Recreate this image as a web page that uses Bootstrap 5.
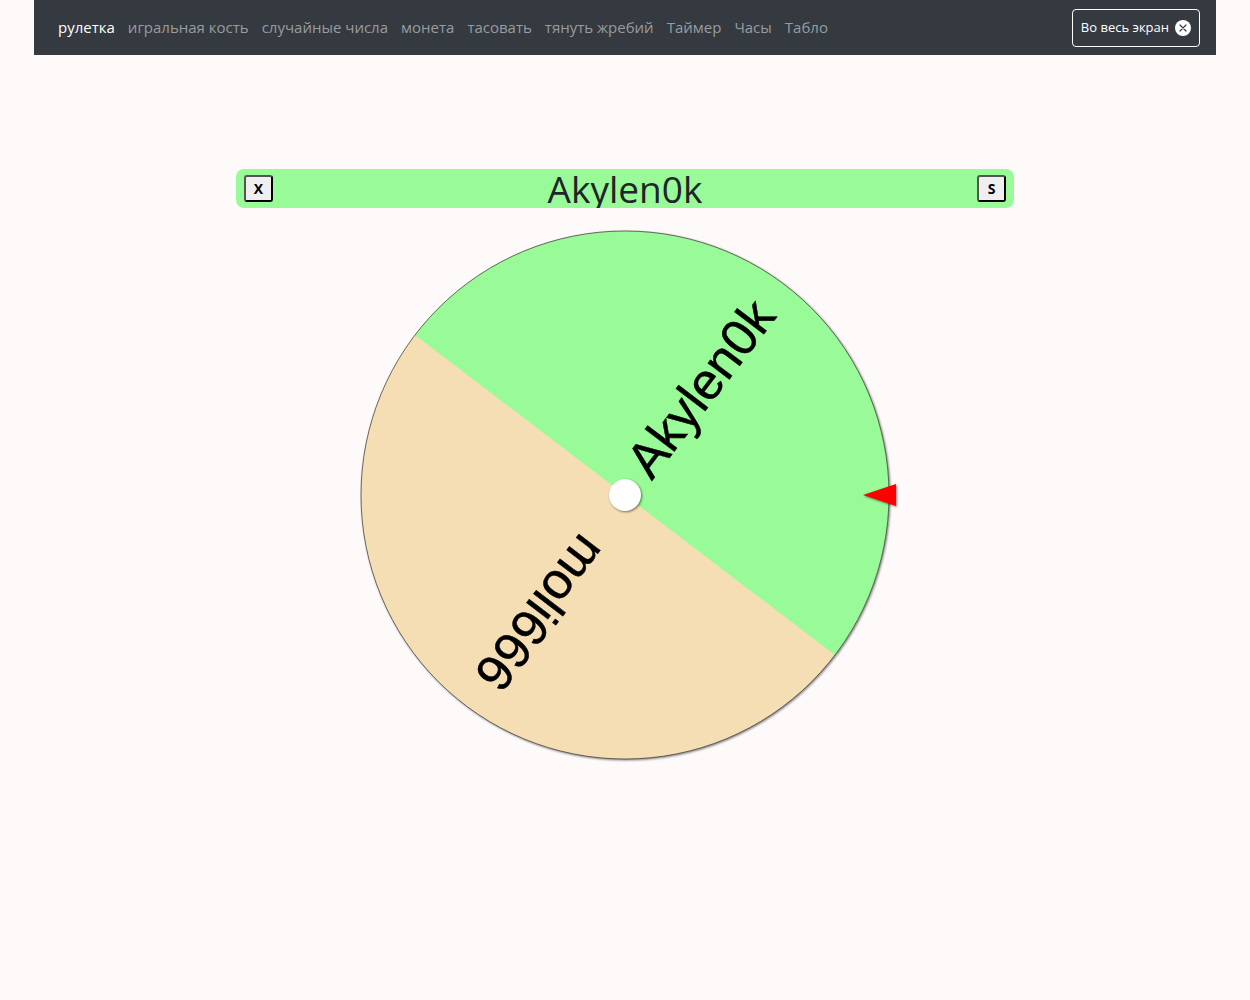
<!DOCTYPE html>
<html lang="ru">
<head>
<meta charset="utf-8">
<meta name="viewport" content="width=device-width, initial-scale=1">
<title>Рулетка</title>
<link href="https://cdn.jsdelivr.net/npm/bootstrap@5.3.0/dist/css/bootstrap.min.css" rel="stylesheet">
<style>
  body { background: #fffafa; font-family: "Open Sans", "Noto Sans", sans-serif; color: #212529; }
  .page-shell { padding: 0 34px; }
  .top-nav { background: #343a40; padding: 8px 16px; min-height: 55px; font-size: 15px; }
  .top-nav .navbar-nav { column-gap: 13px; padding-left: 8px; }
  .navbar.top-nav .navbar-nav .nav-link { color: #999c9f; padding: 6px 0 8px; line-height: 24px; white-space: nowrap; }
  .navbar.top-nav .navbar-nav .nav-link.active { color: #fff; }
  .full-btn { border: 1px solid #fff; border-radius: 4px; color: #fff; font-size: 13px; height: 38px; padding: 0 8px; gap: 6px; white-space: nowrap; }
  .full-btn:hover { border-color: #fff; background: #495057; color: #fff; }
  .wheel-area { padding-top: 114px; --bs-gutter-x: 10px; }
  .result-bar { background: #98fb98; border-radius: 8px; height: 39px; padding: 0 8px; overflow: hidden; }
  .result-name { font-size: 37px; line-height: 44px; margin: 0; font-weight: 400; }
  .tool-btn { width: 29px; height: 27px; padding: 0; border: 2px outset #000; border-radius: 3px; background: #efefef; color: #000; font-size: 14px; line-height: 20px; font-weight: 700; }
  .wheel { width: 100%; max-width: 548px; margin-top: 13px; overflow: visible; }
  .wheel text { font-family: "Liberation Sans", Arial, sans-serif; font-size: 51px; text-anchor: end; }
  .shade { filter: drop-shadow(1px 1px 1px rgba(0, 0, 0, .5)); }
</style>
<script src="https://cdn.jsdelivr.net/npm/bootstrap@5.3.0/dist/js/bootstrap.bundle.min.js" defer></script>
</head>
<body>
<div class="page-shell">
  <nav class="navbar navbar-expand top-nav">
    <ul class="navbar-nav flex-wrap me-auto">
      <li class="nav-item"><a class="nav-link active" aria-current="page" href="#">рулетка</a></li>
      <li class="nav-item"><a class="nav-link" href="#">игральная кость</a></li>
      <li class="nav-item"><a class="nav-link" href="#">случайные числа</a></li>
      <li class="nav-item"><a class="nav-link" href="#">монета</a></li>
      <li class="nav-item"><a class="nav-link" href="#">тасовать</a></li>
      <li class="nav-item"><a class="nav-link" href="#">тянуть жребий</a></li>
      <li class="nav-item"><a class="nav-link" href="#">Таймер</a></li>
      <li class="nav-item"><a class="nav-link" href="#">Часы</a></li>
      <li class="nav-item"><a class="nav-link" href="#">Табло</a></li>
    </ul>
    <button type="button" class="btn full-btn d-flex align-items-center">
      Во весь экран
      <svg width="16" height="16" viewBox="0 0 16 16" aria-hidden="true"><circle cx="8" cy="8" r="8" fill="#fff"/><path d="M5 5l6 6M11 5l-6 6" stroke="#343a40" stroke-width="1.2" stroke-linecap="round"/></svg>
    </button>
  </nav>
  <main class="row justify-content-center wheel-area mx-0">
    <div class="col-12 col-md-8 text-center">
      <div class="result-bar d-flex justify-content-between align-items-center">
        <button type="button" class="tool-btn">X</button>
        <h1 class="result-name">Akylen0k</h1>
        <button type="button" class="tool-btn">S</button>
      </div>
      <svg class="wheel" viewBox="-274 -274 548 548" role="img" aria-label="Рулетка">
        <g class="shade">
          <circle r="264" fill="#f5deb3"/>
          <path transform="rotate(37.3)" d="M-264 0A264 264 0 0 1 264 0Z" fill="#98fb98"/>
          <circle r="264" fill="none" stroke="#333" stroke-width=".7"/>
        </g>
        <g transform="rotate(-52.7)">
          <text x="234" y="13" stroke="#000" stroke-width=".5">Akylen0k</text>
        </g>
        <g transform="rotate(127.3)">
          <text x="234" y="13" stroke="#000" stroke-width=".5">moli666</text>
        </g>
        <circle class="shade" r="16" fill="#fff"/>
        <path class="shade" d="M238 0l33-11v22Z" fill="#f00"/>
      </svg>
    </div>
  </main>
</div>
</body>
</html>
